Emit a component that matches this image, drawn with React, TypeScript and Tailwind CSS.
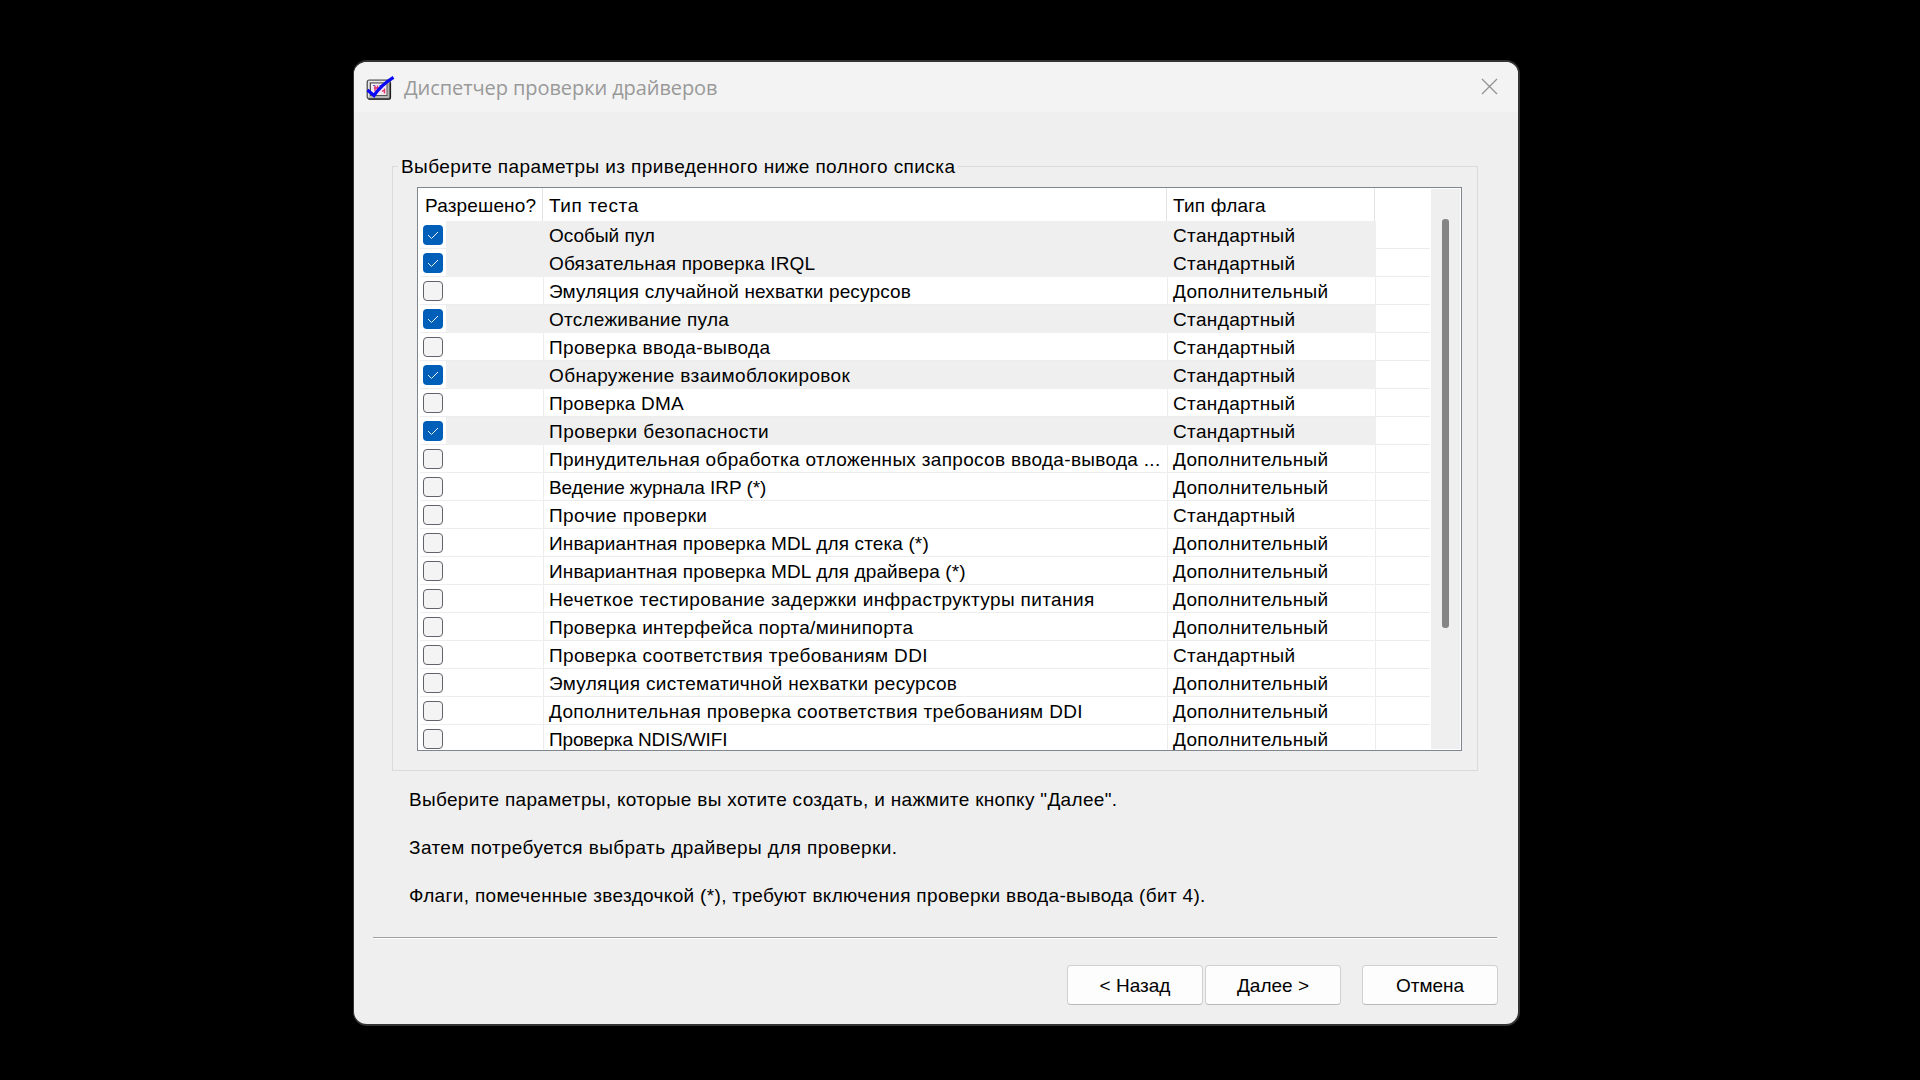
import React from 'react';

interface TestOption {
  name: string;
  tracking: string;
  standard?: boolean;
  checked?: boolean;
}

const options: TestOption[] = [
  { name: 'Особый пул', tracking: 'tracking-[0px]', standard: true, checked: true },
  { name: 'Обязательная проверка IRQL', tracking: 'tracking-[0.17px]', standard: true, checked: true },
  { name: 'Эмуляция случайной нехватки ресурсов', tracking: 'tracking-[0.16px]' },
  { name: 'Отслеживание пула', tracking: 'tracking-[0.24px]', standard: true, checked: true },
  { name: 'Проверка ввода-вывода', tracking: 'tracking-[0.36px]', standard: true },
  { name: 'Обнаружение взаимоблокировок', tracking: 'tracking-[0.36px]', standard: true, checked: true },
  { name: 'Проверка DMA', tracking: 'tracking-[0.18px]', standard: true },
  { name: 'Проверки безопасности', tracking: 'tracking-[0.48px]', standard: true, checked: true },
  { name: 'Принудительная обработка отложенных запросов ввода-вывода ...', tracking: 'tracking-[0.31px]' },
  { name: 'Ведение журнала IRP (*)', tracking: 'tracking-[-0.07px]' },
  { name: 'Прочие проверки', tracking: 'tracking-[0.42px]', standard: true },
  { name: 'Инвариантная проверка MDL для стека (*)', tracking: 'tracking-[0.13px]' },
  { name: 'Инвариантная проверка MDL для драйвера (*)', tracking: 'tracking-[0.13px]' },
  { name: 'Нечеткое тестирование задержки инфраструктуры питания', tracking: 'tracking-[0.38px]' },
  { name: 'Проверка интерфейса порта/минипорта', tracking: 'tracking-[0.31px]' },
  { name: 'Проверка соответствия требованиям DDI', tracking: 'tracking-[0.34px]', standard: true },
  { name: 'Эмуляция систематичной нехватки ресурсов', tracking: 'tracking-[0.3px]' },
  { name: 'Дополнительная проверка соответствия требованиям DDI', tracking: 'tracking-[0.36px]' },
  { name: 'Проверка NDIS/WIFI', tracking: 'tracking-[-0.16px]' },
];

const VerifierIcon: React.FC = () => (
  <svg width="30" height="28" viewBox="0 0 30 28" fill="none">
    <rect x="1.2" y="7" width="23" height="19" rx="2" fill="#b4b4b4" stroke="#4a4a4a" strokeWidth="1.2" />
    <path d="M2.6 24V8.5H22.5" stroke="#ececec" strokeWidth="1" />
    <path d="M2.5 26.1H23Q24.4 26.1 24.4 24.5V9.5" stroke="#1c1c1c" strokeWidth="1.4" />
    <rect x="4.5" y="10" width="16.5" height="12.5" fill="#f5eaf2" stroke="#555" strokeWidth="1" />
    <path d="M9 12.5v6M11.5 12.5v7M8 15h6M16 18.5l3-2M18.5 15.5v5" stroke="#e0356f" strokeWidth="1.4" />
    <path d="M13.5 12.5h3M7 12.5h2" stroke="#5560d8" strokeWidth="1.2" />
    <path d="M1.5 17L8 22.5Q15 12 27.5 4.3" stroke="#0a0af5" strokeWidth="3.2" />
  </svg>
);

const CheckBox: React.FC<{ checked?: boolean }> = ({ checked }) =>
  checked ? (
    <span className="flex size-5 items-center justify-center rounded-[4px] bg-[#005fb8]">
      <svg width="12" height="10" viewBox="0 0 12 10" fill="none">
        <path d="M1 5l3.5 3.5L11 2" stroke="#e8f2fb" strokeWidth="1" />
      </svg>
    </span>
  ) : (
    <span className="size-5 rounded-[4px] border border-[#62626a] bg-[#f4f4f4]" />
  );

const OptionRow: React.FC<{ option: TestOption }> = ({ option }) => {
  const fill = option.checked ? 'bg-[#efefef]' : 'border-b border-[#ededed]';
  const line = option.checked ? '' : 'border-r border-[#ededed]';

  return (
    <div className="flex h-7 shrink-0 leading-[29px]">
      <div className="flex w-[26px] items-start border-b border-[#ededed] pt-1 pl-[3px]">
        <CheckBox checked={option.checked} />
      </div>
      <div className={`w-[98px] ${fill} ${line}`} />
      <div className={`w-[624px] pl-[5px] whitespace-nowrap ${fill} ${line} ${option.tracking}`}>{option.name}</div>
      <div className={`w-[208px] pl-[5px] tracking-[0.36px] whitespace-nowrap ${fill} ${line}`}>
        {option.standard ? 'Стандартный' : 'Дополнительный'}
      </div>
      <div className="w-[54px] border-b border-[#ededed]" />
    </div>
  );
};

const DialogButton: React.FC<{ label: string }> = ({ label }) => (
  <button className="h-10 w-[136px] rounded-[4px] border border-[#d0d0d0] border-b-[#b9b9b9] bg-[#fdfdfd] pt-px leading-[25px]">
    {label}
  </button>
);

const App: React.FC = () => {
  return (
    <div className="h-[1080px] w-[1920px] overflow-hidden bg-black pt-[60px] pl-[353px] font-['Liberation_Sans',Arial,sans-serif] text-[19px] text-black">
      <div className="flex h-[966px] w-[1167px] flex-col overflow-hidden rounded-[14px] border-2 border-l border-[#333] bg-[#efefef]">
        {/* Title bar */}
        <div className="flex h-[50px] shrink-0 items-center bg-[#f3f3f3] pr-[20px] pl-[12px]">
          <VerifierIcon />
          <h1 className="ml-[8px] pt-px font-['Open_Sans','Noto_Sans',sans-serif] text-[20px] tracking-[-0.08px] text-[#999]">
            Диспетчер проверки драйверов
          </h1>
          <svg className="mb-[2px] ml-auto" width="17" height="17" viewBox="0 0 17 17" fill="none">
            <path d="M1 1l15 15M16 1L1 16" stroke="#929292" strokeWidth="1.3" />
          </svg>
        </div>

        {/* Options group */}
        <fieldset className="mt-[42px] mr-[40px] ml-[38px] h-[617px] shrink-0 border border-[#dadada] pt-2 pl-[24px]">
          <legend className="-ml-[19px] h-[25px] px-[3px] leading-[25px] tracking-[0.42px]">
            Выберите параметры из приведенного ниже полного списка
          </legend>
          <div className="flex h-[564px] w-[1045px] overflow-hidden border border-[#7f868f] bg-white">
            <div className="flex flex-1 flex-col overflow-hidden pl-[2px]">
              <div className="flex h-[33px] shrink-0 leading-[35px]">
                <div className="w-[123px] border-r border-[#e4e4e4] pl-[5px] tracking-[0.15px]">Разрешено?</div>
                <div className="w-[624px] border-r border-[#e4e4e4] pl-[6px] tracking-[0.58px]">Тип теста</div>
                <div className="w-[208px] border-r border-[#e4e4e4] pl-[6px] tracking-[0.2px]">Тип флага</div>
              </div>
              {options.map((option) => (
                <OptionRow key={option.name} option={option} />
              ))}
            </div>
            <div className="mt-px mr-px mb-px w-[29px] bg-[#efefef] pt-[30px] pl-[11px]">
              <div className="h-[409px] w-[7px] rounded-[3px] bg-[#858585]" />
            </div>
          </div>
        </fieldset>

        {/* Hints */}
        <div className="flex flex-col gap-6 pt-[17px] pl-[55px] leading-6">
          <p className="tracking-[0.32px]">Выберите параметры, которые вы хотите создать, и нажмите кнопку "Далее".</p>
          <p className="tracking-[0.41px]">Затем потребуется выбрать драйверы для проверки.</p>
          <p className="tracking-[0.33px]">
            Флаги, помеченные звездочкой (*), требуют включения проверки ввода-вывода (бит 4).
          </p>
        </div>

        {/* Footer */}
        <div className="mt-[29px] mr-[21px] ml-[19px] h-[2px] shrink-0 border-t border-[#a0a0a0] bg-white" />
        <div className="flex justify-end gap-[2px] pt-[26px] pr-[20px]">
          <DialogButton label="< Назад" />
          <DialogButton label="Далее >" />
          <div className="ml-[19px]">
            <DialogButton label="Отмена" />
          </div>
        </div>
      </div>
    </div>
  );
};

export default App;
